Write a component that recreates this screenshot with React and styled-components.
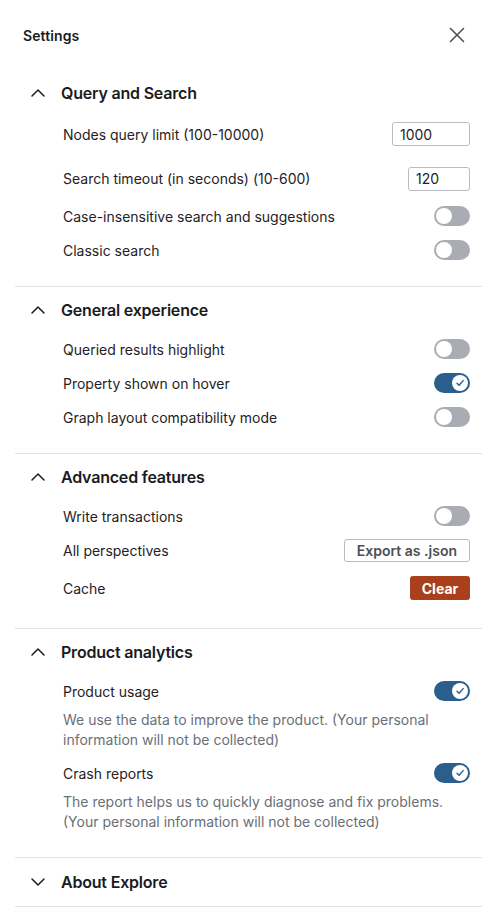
import React from 'react';
import styled, { createGlobalStyle } from 'styled-components';
import { ChevronUp, ChevronDown, X } from 'lucide-react';

const GlobalStyle = createGlobalStyle`
  body {
    margin: 0;
    background: #ffffff;
    font-family: Inter, "Noto Sans", sans-serif;
    color: #1a1b1d;
  }
`;

const Panel = styled.div`
  width: 492px;
  min-height: 922px;
  background: #ffffff;
`;

const TitleBar = styled.div`
  height: 70px;
  display: flex;
  align-items: center;
  justify-content: space-between;
  padding: 0 22px 0 23px;
  box-sizing: border-box;
`;

const Title = styled.h1`
  margin: 0;
  font-size: 14px;
  font-weight: 600;
  letter-spacing: 0.1px;
  color: #1a1b1d;
`;

const CloseButton = styled.button`
  border: none;
  background: none;
  padding: 0;
  display: flex;
  color: #4d5157;
  cursor: pointer;
`;

const Sections = styled.div`
  padding: 0 10px 0 15px;
`;

const Section = styled.section`
  border-bottom: 1px solid #e2e3e5;
  padding-bottom: ${p => (p.$open ? '19px' : '0')};
`;

const SectionHeader = styled.button`
  width: 100%;
  height: ${p => (p.$open ? '45px' : '48px')};
  display: flex;
  align-items: center;
  gap: 11px;
  padding: 0 0 0 11px;
  border: none;
  background: none;
  font-family: inherit;
  font-size: 16px;
  font-weight: 600;
  letter-spacing: -0.2px;
  color: #1a1b1d;
  cursor: pointer;
  box-sizing: border-box;
`;

const Row = styled.div`
  height: ${p => p.$h || 34}px;
  margin-top: ${p => p.$mt || 0}px;
  display: flex;
  align-items: center;
  justify-content: space-between;
  padding: 0 12px 0 48px;
`;

const Label = styled.span`
  font-size: 14px;
  color: #1f2226;
`;

const Description = styled.p`
  margin: 2px 0 6px;
  padding: 0 8px 0 48px;
  font-size: 14px;
  line-height: 20px;
  color: #6a6f77;
`;

const NumberInput = styled.input`
  width: ${p => p.$w}px;
  height: 24px;
  box-sizing: border-box;
  border: 1px solid #b9bdc3;
  border-radius: 3px;
  padding: 0 7px;
  font-family: inherit;
  font-size: 14px;
  color: #1f2226;
  outline: none;
`;

const Track = styled.span`
  width: 36px;
  height: 20px;
  border-radius: 10px;
  background: ${p => (p.$on ? '#2a5f8d' : '#a9adb3')};
  display: flex;
  align-items: center;
  justify-content: ${p => (p.$on ? 'flex-end' : 'flex-start')};
  padding: 0 2px;
  box-sizing: border-box;
`;

const Knob = styled.span`
  width: 16px;
  height: 16px;
  border-radius: 50%;
  background: #ffffff;
  display: flex;
  align-items: center;
  justify-content: center;
`;

const OutlineButton = styled.button`
  height: 23px;
  padding: 0 12px;
  border: 1px solid #b9bdc3;
  border-radius: 3px;
  background: #ffffff;
  font-family: inherit;
  font-size: 14px;
  font-weight: 600;
  color: #4b5057;
  cursor: pointer;
`;

const DangerButton = styled.button`
  height: 24px;
  width: 60px;
  border: none;
  border-radius: 3px;
  background: #a9401b;
  font-family: inherit;
  font-size: 14px;
  font-weight: 700;
  color: #ffffff;
  cursor: pointer;
`;

const Toggle = ({ on }) => (
  <Track $on={on}>
    <Knob>
      {on && (
        <svg width="10" height="10" viewBox="0 0 10 10">
          <path d="M2 5.2 4.1 7.3 8.2 2.6" fill="none" stroke="#2a5f8d" strokeWidth="1.4" strokeLinecap="round" strokeLinejoin="round" />
        </svg>
      )}
    </Knob>
  </Track>
);

const SettingsSection = ({ title, open = true, children }) => (
  <Section $open={open}>
    <SectionHeader $open={open}>
      {open ? <ChevronUp size={24} strokeWidth={1.5} /> : <ChevronDown size={24} strokeWidth={1.5} />}
      {title}
    </SectionHeader>
    {open && children}
  </Section>
);

const App = () => (
  <Panel>
    <GlobalStyle />
    <TitleBar>
      <Title>Settings</Title>
      <CloseButton aria-label="Close">
        <X size={26} strokeWidth={1.4} />
      </CloseButton>
    </TitleBar>

    <Sections>
      <SettingsSection title="Query and Search">
        <Row $h={38}>
          <Label>Nodes query limit (100-10000)</Label>
          <NumberInput $w={78} defaultValue="1000" />
        </Row>
        <Row $h={41} $mt={5}>
          <Label>Search timeout (in seconds) (10-600)</Label>
          <NumberInput $w={62} defaultValue="120" />
        </Row>
        <Row>
          <Label>Case-insensitive search and suggestions</Label>
          <Toggle />
        </Row>
        <Row>
          <Label>Classic search</Label>
          <Toggle />
        </Row>
      </SettingsSection>

      <SettingsSection title="General experience">
        <Row>
          <Label>Queried results highlight</Label>
          <Toggle />
        </Row>
        <Row>
          <Label>Property shown on hover</Label>
          <Toggle on />
        </Row>
        <Row>
          <Label>Graph layout compatibility mode</Label>
          <Toggle />
        </Row>
      </SettingsSection>

      <SettingsSection title="Advanced features">
        <Row>
          <Label>Write transactions</Label>
          <Toggle />
        </Row>
        <Row>
          <Label>All perspectives</Label>
          <OutlineButton>Export as .json</OutlineButton>
        </Row>
        <Row $h={42}>
          <Label>Cache</Label>
          <DangerButton>Clear</DangerButton>
        </Row>
      </SettingsSection>

      <SettingsSection title="Product analytics">
        <Row>
          <Label>Product usage</Label>
          <Toggle on />
        </Row>
        <Description>
          We use the data to improve the product. (Your personal information will not be collected)
        </Description>
        <Row>
          <Label>Crash reports</Label>
          <Toggle on />
        </Row>
        <Description>
          The report helps us to quickly diagnose and fix problems. (Your personal information will not be collected)
        </Description>
      </SettingsSection>

      <SettingsSection title="About Explore" open={false} />
    </Sections>
  </Panel>
);

export default App;
